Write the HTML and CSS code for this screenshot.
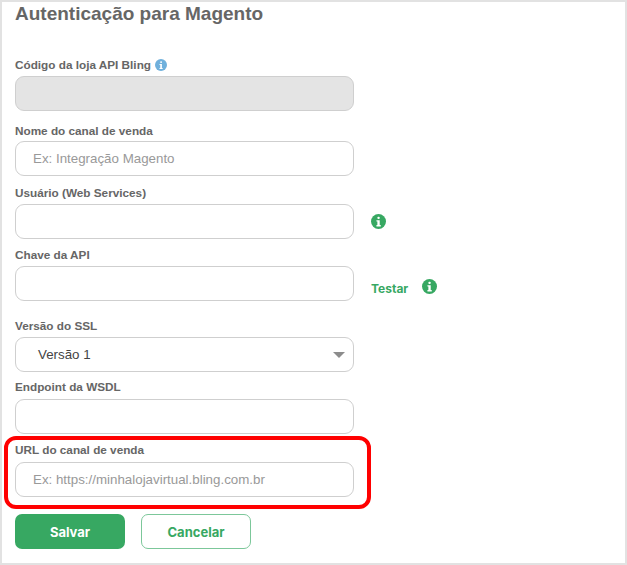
FILE: index.html
```html
<!DOCTYPE html>
<html lang="pt-BR">
<head>
<meta charset="UTF-8">
<title>Autenticação para Magento</title>
<link rel="stylesheet" href="styles.css">
</head>
<body>

<div id="frame">
  <h2 class="title">Autenticação para Magento</h2>

  <div class="field first">
    <label>Código da loja API Bling
      <svg class="info small" viewBox="0 0 16 16"><circle cx="8" cy="8" r="8"/><rect x="6.9" y="3" width="2.4" height="2.4" rx="1"/><path d="M6 6.7h3.2v5.2h1v1.3H6v-1.3h1V8H6z"/></svg>
    </label>
    <input type="text" class="input" disabled>
  </div>

  <div class="field name">
    <label>Nome do canal de venda</label>
    <input type="text" class="input" placeholder="Ex: Integração Magento">
  </div>

  <div class="field user">
    <label>Usuário (Web Services)</label>
    <div class="row">
      <input type="text" class="input">
      <svg class="info green" viewBox="0 0 16 16"><circle cx="8" cy="8" r="8"/><rect x="6.8" y="2.8" width="2.5" height="2.5" rx="1"/><path d="M5.8 6.6h3.5v5.2h1.1v1.5H5.8v-1.5h1V8.100h-1z"/></svg>
    </div>
  </div>

  <div class="field key">
    <label>Chave da API</label>
    <div class="row">
      <input type="text" class="input">
      <a class="test" href="#">Testar</a>
      <svg class="info green test-info" viewBox="0 0 16 16"><circle cx="8" cy="8" r="8"/><rect x="6.8" y="2.8" width="2.5" height="2.5" rx="1"/><path d="M5.8 6.6h3.5v5.2h1.1v1.5H5.800v-1.5h1V8.100h-1z"/></svg>
    </div>
  </div>

  <div class="field ssl">
    <label>Versão do SSL</label>
    <div class="select">Versão 1<span class="arrow"></span></div>
  </div>

  <div class="field wsdl">
    <label>Endpoint da WSDL</label>
    <input type="text" class="input">
  </div>

  <div class="field url">
    <label>URL do canal de venda</label>
    <input type="text" class="input" placeholder="Ex: https://minhalojavirtual.bling.com.br">
  </div>

  <div class="buttons">
    <button class="btn save">Salvar</button>
    <button class="btn cancel">Cancelar</button>
  </div>

  <div class="highlight"></div>
</div>

</body>
</html>
```

FILE: styles.css
```css
* {
  box-sizing: border-box;
}
html, body {
  height: 100%;
}
body {
  margin: 0;
  background-color: #fff;
  font-family: "Liberation Sans", Arial, sans-serif;
}
#frame {
  position: relative;
  width: 627px;
  height: 565px;
  border: 2px solid #e2e2e2;
  padding: 0 13px;
  overflow: hidden;
}
.title {
  margin: 0;
  font-size: 19px;
  line-height: 24px;
  font-weight: bold;
  color: #666;
}
.field label {
  display: flex;
  align-items: center;
  gap: 4px;
  height: 14px;
  margin-bottom: 4px;
  font-size: 11.75px;
  line-height: 14px;
  font-weight: bold;
  color: #666;
}
.field.first {
  margin-top: 32px;
}
.field.name {
  margin-top: 13px;
}
.field.name label {
  margin-bottom: 3px;
}
.field.user {
  margin-top: 10px;
}
.field.key {
  margin-top: 9px;
}
.field.ssl {
  margin-top: 18px;
}
.field.wsdl {
  margin-top: 8px;
}
.field.wsdl label, .field.url label {
  margin-bottom: 5px;
}
.field.url {
  margin-top: 9px;
}
.row {
  display: flex;
  align-items: center;
}
.input {
  display: block;
  width: 339px;
  height: 35px;
  padding: 0 17px;
  border: 1px solid #cfcfcf;
  border-radius: 9px;
  background-color: #fff;
  font-family: inherit;
  font-size: 13.33px;
  color: #555;
  outline: none;
}
.input::placeholder {
  color: #999;
  opacity: 1;
}
.input:disabled {
  background-color: #e4e4e4;
}
.select {
  position: relative;
  width: 339px;
  height: 35px;
  padding-left: 22px;
  border: 1px solid #cfcfcf;
  border-radius: 9px;
  font-size: 13.33px;
  line-height: 33px;
  color: #444;
}
.arrow {
  position: absolute;
  top: 14px;
  right: 8px;
  width: 0;
  height: 0;
  border-left: 6px solid transparent;
  border-right: 6px solid transparent;
  border-top: 6px solid #8c8c8c;
}
.info {
  flex: none;
  width: 15px;
  height: 15px;
  margin-left: 17px;
  margin-bottom: 1px;
  fill: #fff;
}
.info circle {
  fill: #37a862;
}
.info.small {
  width: 12px;
  height: 12px;
  margin-left: 0;
}
.info.small circle {
  fill: #6fb0dc;
}
.info.test-info {
  margin-left: 14px;
  margin-top: 7px;
}
.test {
  margin-left: 17px;
  margin-top: 9px;
  font-family: Inter, sans-serif;
  font-size: 12px;
  font-weight: 700;
  color: #37a862;
  text-decoration: none;
}
.buttons {
  display: flex;
  gap: 16px;
  margin-top: 17px;
}
.btn {
  width: 110px;
  height: 35px;
  border-radius: 7px;
  font-family: Inter, sans-serif;
  font-size: 13px;
  font-weight: 700;
  cursor: pointer;
}
.save {
  border: none;
  background-color: #37a862;
  color: #fff;
}
.cancel {
  border: 1px solid #7cc79a;
  background-color: #fff;
  color: #37a862;
}
.highlight {
  position: absolute;
  left: 2px;
  top: 434px;
  width: 367px;
  height: 73px;
  border: 4px solid #f00;
  border-radius: 12px;
  pointer-events: none;
}
```
